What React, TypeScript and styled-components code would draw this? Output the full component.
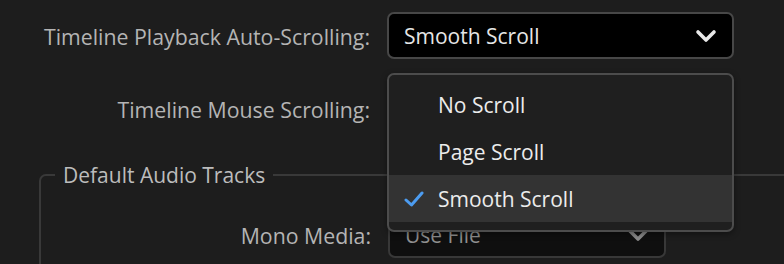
import React from 'react';
import styled, { createGlobalStyle } from 'styled-components';

const GlobalStyle = createGlobalStyle`
  html,
  body {
    margin: 0;
    padding: 0;
    width: 784px;
    height: 264px;
    overflow: hidden;
    background-color: #1d1d1d;
    font-family: 'Open Sans', 'Noto Sans', sans-serif;
  }
`;

interface IChevron {
  color: string;
}

const Chevron = ({ color }: IChevron) => {
  return (
    <svg width="22" height="14" viewBox="0 0 22 14">
      <polyline
        points="3,3 11,11 19,3"
        fill="none"
        stroke={color}
        strokeWidth="3.6"
        strokeLinecap="round"
        strokeLinejoin="round"
      />
    </svg>
  );
};

const CheckIcon = () => {
  return (
    <svg width="20" height="16" viewBox="0 0 20 16">
      <polyline
        points="2,9 7.5,14 18,2"
        fill="none"
        stroke="#4c9cf0"
        strokeWidth="3"
        strokeLinecap="round"
        strokeLinejoin="round"
      />
    </svg>
  );
};

const options = ['No Scroll', 'Page Scroll', 'Smooth Scroll'];

export default function App() {
  const selected = 'Smooth Scroll';

  return (
    <>
      <GlobalStyle />
      <StyledPanel>
        <StyledRow $labelWidth={370} $top={12}>
          <StyledLabel>Timeline Playback Auto-Scrolling:</StyledLabel>
          <StyledControl>
            <StyledSelect $width={347}>
              <StyledValue>{selected}</StyledValue>
              <Chevron color="#e8e8e8" />
            </StyledSelect>
            <StyledMenu>
              {options.map((opt) => (
                <StyledItem key={opt} $active={opt === selected}>
                  <StyledCheck>{opt === selected && <CheckIcon />}</StyledCheck>
                  {opt}
                </StyledItem>
              ))}
            </StyledMenu>
          </StyledControl>
        </StyledRow>

        {/* the open menu hides this select completely */}
        <StyledRow $labelWidth={370} $top={26}>
          <StyledLabel>Timeline Mouse Scrolling:</StyledLabel>
          <StyledControl>
            <StyledSelect $width={347}>
              <Chevron color="#e8e8e8" />
            </StyledSelect>
          </StyledControl>
        </StyledRow>

        <StyledFieldset>
          <StyledLegend>Default Audio Tracks</StyledLegend>
          <StyledRow $labelWidth={316} $top={0}>
            <StyledLabel>Mono Media:</StyledLabel>
            <StyledControl>
              <StyledSelect $width={278} $dim>
                <StyledValue $dim>Use File</StyledValue>
                <Chevron color="#8a8a8a" />
              </StyledSelect>
            </StyledControl>
          </StyledRow>
        </StyledFieldset>
      </StyledPanel>
    </>
  );
}

const StyledPanel = styled.div`
  width: 784px;
  height: 264px;
  overflow: hidden;
  display: flex;
  flex-direction: column;
`;

const StyledRow = styled.div<{ $labelWidth: number; $top: number }>`
  display: grid;
  grid-template-columns: ${(p) => p.$labelWidth}px auto;
  column-gap: 17px;
  align-items: center;
  margin-top: ${(p) => p.$top}px;
`;

const StyledLabel = styled.div`
  text-align: right;
  font-size: 21.3px;
  color: #b4b4b4;
  padding-top: 2px;
  white-space: nowrap;
`;

const StyledControl = styled.div`
  position: relative;
`;

const StyledSelect = styled.div<{ $width: number; $dim?: boolean }>`
  box-sizing: border-box;
  width: ${(p) => p.$width}px;
  height: 47px;
  padding: 0 15px;
  display: flex;
  align-items: center;
  justify-content: space-between;
  background-color: ${(p) => (p.$dim ? '#0f0f0f' : '#000')};
  border: 2px solid ${(p) => (p.$dim ? '#383838' : '#474747')};
  border-radius: 7px;

  & > svg:only-child {
    margin-left: auto;
  }
`;

const StyledValue = styled.span<{ $dim?: boolean }>`
  font-size: 21px;
  color: ${(p) => (p.$dim ? '#8f8f8f' : '#e6e6e6')};
`;

const StyledMenu = styled.div`
  position: absolute;
  top: 61px;
  left: 0;
  z-index: 10;
  box-sizing: border-box;
  width: 347px;
  padding: 6px 0 8px;
  background-color: #1f1f1f;
  border: 2px solid #4c4c4c;
  border-radius: 7px;
  box-shadow: 0 2px 6px rgba(0, 0, 0, 0.4);
`;

const StyledItem = styled.div<{ $active: boolean }>`
  height: 47px;
  display: flex;
  align-items: center;
  padding-left: 15px;
  font-size: 21px;
  color: #ececec;
  background-color: ${(p) => (p.$active ? '#333333' : 'transparent')};
`;

const StyledCheck = styled.span`
  width: 20px;
  height: 16px;
  margin-right: 14px;
  display: flex;
`;

const StyledFieldset = styled.fieldset`
  flex-shrink: 0;
  margin: 29px -60px 0 39px;
  padding: 22px 0 20px 14px;
  border: 2px solid #393939;
  border-radius: 7px;
  min-width: 0;
`;

const StyledLegend = styled.legend`
  padding: 0 8px;
  font-size: 21px;
  line-height: 28px;
  color: #bcbcbc;
`;
